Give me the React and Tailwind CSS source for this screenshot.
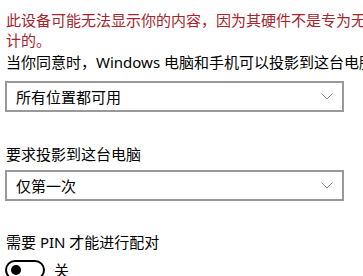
import React from "react";

const Chevron = () => (
  <svg width="12" height="7" viewBox="0 0 12 7" className="text-[#8a8a8a]">
    <path d="M0.5 0.5 L6 6 L11.5 0.5" fill="none" stroke="currentColor" strokeWidth="1" />
  </svg>
);

const Select = ({ value, className }) => (
  <div className={`flex h-[31px] w-[339px] items-center justify-between border-2 border-[#999999] bg-white pl-[9px] pr-[9px] ${className}`}>
    <span>{value}</span>
    <Chevron />
  </div>
);

export default function App() {
  return (
    <div
      className="h-[276px] w-[363px] overflow-hidden bg-white text-[15px] leading-[20px] text-black"
      style={{ fontFamily: '"Noto Sans", "Noto Sans CJK SC", sans-serif' }}
    >
      <div className="w-[432px] pl-[6px] pt-[10px]">
        <p className="text-[#a4262c]">此设备可能无法显示你的内容，因为其硬件不是专为无线投影设计的。</p>
        <p className="mt-[2px] whitespace-nowrap">当你同意时，Windows 电脑和手机可以投影到这台电脑</p>
      </div>
      <div className="pl-[5px]">
        <Select value="所有位置都可用" className="mt-[9px]" />
        <p className="mt-[32px] pl-[1px]">要求投影到这台电脑</p>
        <Select value="仅第一次" className="mt-[6px]" />
        <p className="mt-[31px] pl-[1px]">需要 PIN 才能进行配对</p>
        <div className="mt-[8px] flex items-center gap-[9px]">
          <div className="flex h-[20px] w-[40px] items-center rounded-full border-2 border-black pl-[4px]">
            <div className="h-[10px] w-[10px] rounded-full bg-black" />
          </div>
          <span>关</span>
        </div>
      </div>
    </div>
  );
}
